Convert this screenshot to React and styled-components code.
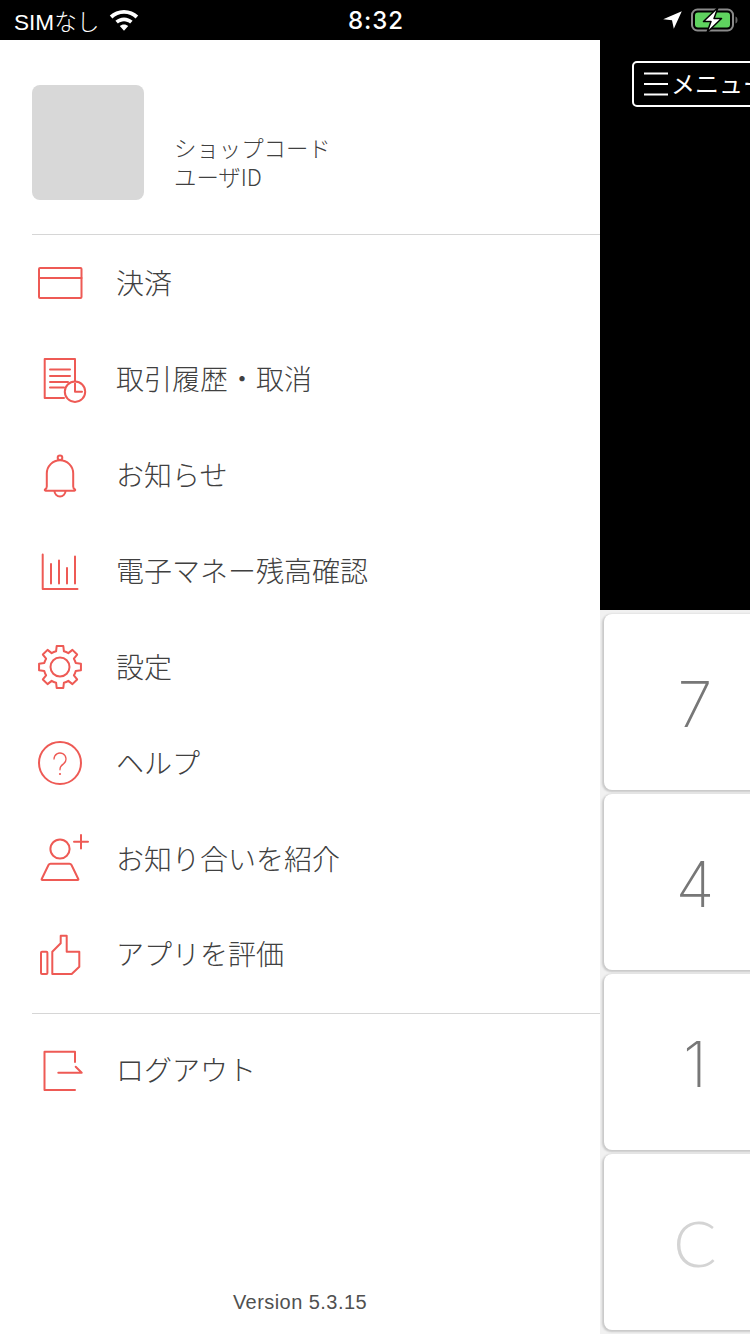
import React from "react";
import styled, { createGlobalStyle } from "styled-components";

const RED = "#ee5a55";
const JP = `"Noto Sans CJK JP", "Noto Sans", sans-serif`;
const LAT = `"Liberation Sans", "Noto Sans CJK JP", sans-serif`;

const Global = createGlobalStyle`
  html, body { margin: 0; padding: 0; background: #000; }
  #root { width: 750px; height: 1334px; overflow: hidden; }
`;

const Page = styled.div`
  width: 750px;
  height: 1334px;
  display: flex;
  flex-direction: column;
  overflow: hidden;
`;
const StatusBar = styled.div`
  height: 40px;
  flex: none;
  background: #000;
  color: #fff;
  display: grid;
  grid-template-columns: 1fr auto 1fr;
  align-items: center;
  padding: 0 12px 0 14px;
  box-sizing: border-box;
  font-family: ${LAT};
`;
const StatusLeft = styled.div`
  display: flex;
  align-items: center;
  gap: 10px;
  font-size: 22.6px;
  font-weight: 300;
`;
const Clock = styled.div`
  font-size: 24px;
  font-weight: 500;
  letter-spacing: 1px;
  font-family: "Inter", ${LAT};
`;
const StatusRight = styled.div`
  display: flex;
  align-items: center;
  justify-content: flex-end;
  gap: 9px;
`;
const Body = styled.div`
  flex: 1;
  display: flex;
  min-height: 0;
`;
const Drawer = styled.nav`
  width: 600px;
  flex: none;
  background: #fff;
  display: flex;
  flex-direction: column;
  padding-left: 32px;
  box-sizing: border-box;
  font-family: ${JP};
  color: #404040;
`;
const Profile = styled.div`
  display: flex;
  align-items: flex-end;
  gap: 30px;
  padding-top: 45px;
  height: 195px;
  box-sizing: border-box;
  border-bottom: 1px solid #d6d6d6;
  padding-bottom: 34px;
`;
const Avatar = styled.div`
  width: 112px;
  height: 115px;
  background: #d8d8d8;
  border-radius: 8px;
`;
const ProfileText = styled.div`
  font-size: 22.4px;
  line-height: 29px;
  font-weight: 300;
  padding-bottom: 9px;
`;
const MenuList = styled.ul`
  list-style: none;
  margin: 0;
  padding: 1px 0 10px;
  border-bottom: 1px solid #d6d6d6;
`;
const MenuRow = styled.li`
  height: 95.86px;
  display: flex;
  align-items: center;
  margin-left: -32px;
  padding-left: 30px;
  gap: 26px;
  font-size: 28px;
  font-weight: 300;
`;
const RowLabel = styled.span`
  padding-bottom: 3px;
`;
const LogoutBlock = styled.ul`
  margin: 0;
  padding: 9px 0 0;
  list-style: none;
`;
const Version = styled.div`
  margin: auto 0 0 -32px;
  height: 43px;
  text-align: center;
  font-family: ${LAT};
  font-size: 20px;
  letter-spacing: 0.45px;
  color: #505050;
`;
const Side = styled.div`
  flex: 1;
  min-width: 0;
  display: flex;
  flex-direction: column;
  overflow: hidden;
`;
const SideTop = styled.div`
  height: 570px;
  flex: none;
  background: #000;
  padding: 21px 0 0 32px;
  box-sizing: border-box;
`;
const MenuButton = styled.div`
  width: 160px;
  height: 46px;
  border: 2px solid #fff;
  border-radius: 5px;
  box-sizing: border-box;
  display: flex;
  align-items: center;
  gap: 3px;
  padding-left: 10px;
  color: #fff;
  font-family: ${JP};
  font-size: 24px;
  font-weight: 400;
  white-space: nowrap;
`;
const MenuButtonLabel = styled.span`
  padding-bottom: 3px;
`;
const Keypad = styled.div`
  flex: 1;
  background: #f1f1f1;
  display: flex;
  flex-direction: column;
  gap: 4px;
  padding: 4px 0 0 4px;
`;
const Key = styled.div`
  width: 182px;
  height: 176px;
  box-sizing: border-box;
  padding-top: ${(p) => (p.$muted ? "0" : "4px")};
  flex: none;
  background: #fff;
  border-radius: 8px;
  box-shadow: -1px 1px 2px 1px #c9c9c9;
  display: flex;
  align-items: center;
  justify-content: center;
  font-family: ${(p) => (p.$muted ? `"Lato", "Inter", sans-serif` : `"Inter", "Roboto", sans-serif`)};
  font-weight: ${(p) => (p.$muted ? 300 : 200)};
  font-size: ${(p) => (p.$muted ? "64px" : "63px")};
  color: ${(p) => (p.$muted ? "#d4d4d4" : "#777")};
`;

const IconSvg = styled.svg.attrs({ viewBox: "0 0 60 60", width: 60, height: 60 })`
  flex: none;
  fill: none;
  stroke: ${RED};
  stroke-width: 2;
  stroke-linejoin: round;
  stroke-linecap: round;
`;

const gearPath = (() => {
  const cx = 30, cy = 30, out = 21.2, inn = 16.2;
  let d = "";
  for (let i = 0; i < 8; i++) {
    const a = (i * 45 - 90) * Math.PI / 180;
    const pt = (r, off) => {
      const t = a + off * Math.PI / 180;
      return `${(cx + r * Math.cos(t)).toFixed(2)} ${(cy + r * Math.sin(t)).toFixed(2)}`;
    };
    d += `${i === 0 ? "M" : "A" + inn + " " + inn + " 0 0 1"} ${pt(inn, -14)} L${pt(out, -9)} L${pt(out, 9)} L${pt(inn, 14)} `;
  }
  return d + `A${inn} ${inn} 0 0 1 ${(cx + inn * Math.cos((-90 - 14) * Math.PI / 180)).toFixed(2)} ${(cy + inn * Math.sin((-90 - 14) * Math.PI / 180)).toFixed(2)}Z`;
})();

const icons = {
  card: <><rect x="9" y="14" width="42.5" height="30" rx="1" /><path d="M9 24H51.5" /></>,
  history: (
    <>
      <path d="M45 31V9H14.7V48H34" />
      <path d="M20 19.5H40M20 26H40M20 32H38M20 37.5H34" />
      <circle cx="45" cy="41.7" r="10.2" />
      <path d="M45 33.5V41.7H52" />
    </>
  ),
  bell: (
    <>
      <circle cx="30" cy="11.8" r="2.3" />
      <path d="M15 43.4c1.2-.6 1.8-1.6 1.8-3V27.5a13.2 13.2 0 0 1 26.4 0V40.4c0 1.4.6 2.4 1.8 3 .5.5.2 1.3-.5 1.3H15.5c-.7 0-1-.8-.5-1.3Z" />
      <path d="M24.5 45a5.5 5.5 0 0 0 11 0" />
    </>
  ),
  chart: (
    <>
      <path d="M12.7 12.5V47H47.5" />
      <path d="M21 22V41.5M29 18.5V41.5M37 26V41.5M45 14.5V41.5" />
    </>
  ),
  gear: <><path d={gearPath} /><circle cx="30" cy="30" r="9.5" /></>,
  help: (
    <>
      <circle cx="30" cy="30" r="21" />
      <path strokeWidth="1.3" d="M24 26a6 6 0 1 1 9.5 4.9c-2.3 1.6-3.5 3-3.5 5.4v.5" />
      <circle cx="30" cy="41" r=".5" strokeWidth="1.2" />
    </>
  ),
  invite: (
    <>
      <circle cx="30" cy="20" r="9.6" />
      <path d="M20.5 34.7H39.5c1 0 1.6.5 2 1.3L48.3 50c.3.6 0 1-.6 1H12.3c-.6 0-.9-.4-.6-1L18.5 36c.4-.8 1-1.3 2-1.3Z" />
      <path d="M51 6V19.5M44 12.7H58" />
    </>
  ),
  thumb: (
    <>
      <rect x="11" y="26.7" width="6.4" height="22.3" rx="1" />
      <path d="M22.3 49V26.7L30.7 18.3V10.7H36.7V26.7H49.3V41.7L41.7 49Z" />
    </>
  ),
  logout: (
    <>
      <path d="M45 21V10.7H14.5V49H45" />
      <path d="M28.3 31.7H51.7L45.7 25.7" />
    </>
  ),
};

const items = [
  ["card", "決済"],
  ["history", "取引履歴・取消"],
  ["bell", "お知らせ"],
  ["chart", "電子マネー残高確認"],
  ["gear", "設定"],
  ["help", "ヘルプ"],
  ["invite", "お知り合いを紹介"],
  ["thumb", "アプリを評価"],
];

const Wifi = () => (
  <svg width="30" height="22" viewBox="0 0 30 22" fill="#fff">
    <path d="M15 1C9.4 1 4.4 3.1 .8 6.6L3.4 9.5C6.4 6.6 10.5 4.8 15 4.8s8.6 1.8 11.6 4.7l2.6-2.9C25.6 3.1 20.6 1 15 1Z" />
    <path d="M15 8.5c-3.3 0-6.3 1.3-8.6 3.3l2.5 2.8c1.6-1.4 3.7-2.3 6.1-2.3s4.5.9 6.1 2.3l2.5-2.8C21.3 9.8 18.3 8.5 15 8.5Z" />
    <path d="M15 15.5c-1.7 0-3.1.6-4.2 1.6l4.2 4.7 4.2-4.7c-1.1-1-2.5-1.6-4.2-1.6Z" />
  </svg>
);
const Arrow = () => (
  <svg width="19" height="18" viewBox="0 0 19 18" fill="#fff">
    <path d="M18.8 0.2 L0.2 8.2 L9 9.2 L10.8 17.8 Z" />
  </svg>
);
const Battery = () => (
  <svg width="47" height="26" viewBox="0 0 47 26">
    <rect x="1" y="2.5" width="41" height="21" rx="5.5" fill="none" stroke="#8a8a8a" strokeWidth="2" />
    <rect x="4" y="5.5" width="35" height="15" rx="3" fill="#5fd35f" />
    <path d="M44.5 9.5c1.3.4 2 1.8 2 3.5s-.7 3.1-2 3.5Z" fill="#666" />
    <path d="M27 0.5 L12.5 14.5H20L16 25.5 L30.5 11.5H23Z" fill="#fff" stroke="#000" strokeWidth="1.5" strokeLinejoin="round" />
  </svg>
);
const Burger = () => (
  <svg width="24" height="24" viewBox="0 0 24 24" stroke="#fff" strokeWidth="2">
    <path d="M0 1.5H24M0 12H24M0 22.5H24" />
  </svg>
);

export default function App() {
  return (
    <Page>
      <Global />
      <StatusBar>
        <StatusLeft>SIMなし<Wifi /></StatusLeft>
        <Clock>8:32</Clock>
        <StatusRight><Arrow /><Battery /></StatusRight>
      </StatusBar>
      <Body>
        <Drawer>
          <Profile>
            <Avatar />
            <ProfileText>ショップコード<br />ユーザID</ProfileText>
          </Profile>
          <MenuList>
            {items.map(([k, label]) => (
              <MenuRow key={k}>
                <IconSvg>{icons[k]}</IconSvg>
                <RowLabel>{label}</RowLabel>
              </MenuRow>
            ))}
          </MenuList>
          <LogoutBlock>
            <MenuRow>
              <IconSvg>{icons.logout}</IconSvg>
              <RowLabel>ログアウト</RowLabel>
            </MenuRow>
          </LogoutBlock>
          <Version>Version 5.3.15</Version>
        </Drawer>
        <Side>
          <SideTop>
            <MenuButton><Burger /><MenuButtonLabel>メニュー</MenuButtonLabel></MenuButton>
          </SideTop>
          <Keypad>
            <Key>7</Key>
            <Key>4</Key>
            <Key>1</Key>
            <Key $muted>C</Key>
          </Keypad>
        </Side>
      </Body>
    </Page>
  );
}
